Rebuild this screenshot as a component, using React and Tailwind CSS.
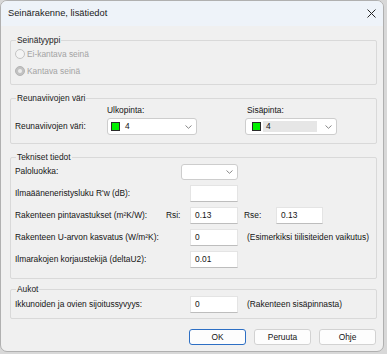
import React from 'react';

const Chevron = () => (
  <svg width="7" height="4" viewBox="0 0 7 4" className="mr-[4px] shrink-0">
    <path d="M0.5 0.5L3.5 3.3L6.5 0.5" stroke="#7a7a7a" strokeWidth="0.9" fill="none" />
  </svg>
);

const Group = ({ title, className, children }) => (
  <div className={`relative border border-[#d9d9d9] rounded-[2px] ${className}`}>
    <span className="absolute left-[5px] -top-[6px] px-[1px] bg-[#f0f0f0] leading-[11px] text-[#1a1a1a]">{title}</span>
    {children}
  </div>
);

const Field = ({ value, className = 'w-[48px]' }) => (
  <div className={`h-[17px] bg-white border border-[#e4e4e4] border-b-[#bdbdbd] flex items-center pl-[4px] ${className}`}>
    {value}
  </div>
);

const Swatch = () => <span className="w-[9px] h-[9px] bg-[#00f000] border border-[#2a2a2a] shrink-0" />;

const Radio = ({ label, checked }) => (
  <div className="h-[14px] flex items-center">
    <span className={`ml-[4px] w-[10px] h-[10px] rounded-full border flex items-center justify-center ${checked ? 'bg-[#c2c2c2] border-[#b4b4b4]' : 'bg-[#f4f4f4] border-[#c4c4c4]'}`}>
      {checked && <span className="w-[4px] h-[4px] rounded-full bg-[#ececec]" />}
    </span>
    <span className="ml-[2px] text-[#a3a3a3]">{label}</span>
  </div>
);

const Button = ({ label, primary }) => (
  <div className={`h-[16px] w-[57px] flex items-center justify-center rounded-[3px] bg-[#fdfdfd] border ${primary ? 'border-[#2d6fc4]' : 'border-[#d2d2d2]'}`}>
    {label}
  </div>
);

export default function App() {
  return (
    <div className="w-[387px] h-[354px] bg-[#d8d8d8] font-['Liberation_Sans',Arial,sans-serif] text-[8.4px] text-[#141414] leading-[11px]">
      <div className="w-[384px] h-[352px] rounded-[7px] border border-[#b0b0b0] bg-[#f0f0f0] overflow-hidden flex flex-col">
        <div className="h-[25px] shrink-0 bg-[#eef3f9] flex items-center justify-between pl-[7px] pr-[6px]">
          <span className="text-[9.3px] text-[#1a1a1a]">Seinärakenne, lisätiedot</span>
          <svg width="9" height="9" viewBox="0 0 9 9" className="mr-[1px]">
            <path d="M0.5 0.5L8.5 8.5M8.5 0.5L0.5 8.5" stroke="#262626" strokeWidth="1" />
          </svg>
        </div>

        <div className="flex flex-col pt-[14px] pl-[9px] pr-[6px]">
          <Group title="Seinätyyppi" className="h-[45px] pt-[6px] flex flex-col gap-[3px]">
            <Radio label="Ei-kantava seinä" />
            <Radio label="Kantava seinä" checked />
          </Group>

          <Group title="Reunaviivojen väri" className="mt-[13px] h-[46px] pt-[6px] pl-[4px]">
            <div className="grid grid-cols-[92px_90px_48px_92px] h-[10px] items-center">
              <span />
              <span>Ulkopinta:</span>
              <span />
              <span className="pl-[2px]">Sisäpinta:</span>
            </div>
            <div className="grid grid-cols-[92px_90px_48px_92px] mt-[3px] items-center">
              <span>Reunaviivojen väri:</span>
              <div className="h-[17px] flex items-center bg-white border border-[#cdcdcd] rounded-[3px]">
                <div className="flex-1 flex items-center pl-[3px]">
                  <Swatch />
                  <span className="ml-[5px]">4</span>
                </div>
                <Chevron />
              </div>
              <span />
              <div className="h-[17px] flex items-center bg-white border border-[#cdcdcd] rounded-[3px]">
                <div className="flex-1 flex items-center pl-[6px] h-full py-[2px]">
                  <Swatch />
                  <span className="ml-[2px] flex-1 h-full bg-[#e6e6e6] flex items-center pl-[3px] mr-[8px]">4</span>
                </div>
                <Chevron />
              </div>
            </div>
          </Group>

          <Group title="Tekniset tiedot" className="mt-[13px] h-[122px] pt-[5px] pl-[4px] flex flex-col gap-[5px]">
            <div className="h-[17px] flex items-center">
              <span className="w-[166px]">Paloluokka:</span>
              <div className="h-[16px] w-[57px] flex items-center justify-end bg-white border border-[#cdcdcd] rounded-[3px]">
                <Chevron />
              </div>
            </div>
            <div className="h-[17px] flex items-center">
              <span className="w-[175px]">Ilmaääneneristysluku R'w (dB):</span>
              <Field value="" />
            </div>
            <div className="h-[17px] flex items-center">
              <span className="w-[151px]">Rakenteen pintavastukset (m²K/W):</span>
              <span className="w-[24px]">Rsi:</span>
              <Field value="0.13" />
              <span className="ml-[6px] w-[32px]">Rse:</span>
              <Field value="0.13" className="w-[47px]" />
            </div>
            <div className="h-[17px] flex items-center">
              <span className="w-[175px]">Rakenteen U-arvon kasvatus (W/m²K):</span>
              <Field value="0" />
              <span className="ml-[9px]">(Esimerkiksi tiilisiteiden vaikutus)</span>
            </div>
            <div className="h-[17px] flex items-center">
              <span className="w-[175px]">Ilmarakojen korjaustekijä (deltaU2):</span>
              <Field value="0.01" />
            </div>
          </Group>

          <Group title="Aukot" className="mt-[10px] h-[30px] pt-[6px] pl-[4px]">
            <div className="h-[17px] flex items-center">
              <span className="w-[175px]">Ikkunoiden ja ovien sijoitussyvyys:</span>
              <Field value="0" />
              <span className="ml-[9px]">(Rakenteen sisäpinnasta)</span>
            </div>
          </Group>

          <div className="mt-[10px] mr-[1px] flex justify-end gap-[8px]">
            <Button label="OK" primary />
            <Button label="Peruuta" />
            <Button label="Ohje" />
          </div>
        </div>
      </div>
    </div>
  );
}
